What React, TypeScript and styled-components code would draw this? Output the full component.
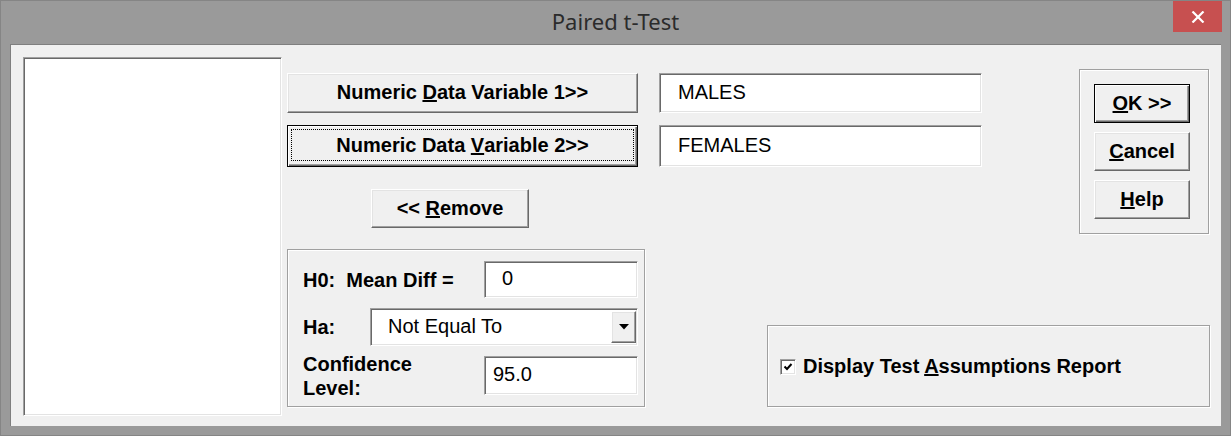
import React from "react";
import styled, { createGlobalStyle, css } from "styled-components";

const GlobalStyle = createGlobalStyle`
  html, body {
    margin: 0;
    padding: 0;
    overflow: hidden;
    background: #9a9a9a;
  }
  * {
    box-sizing: border-box;
  }
`;

const raised = css`
  border-top: 1px solid #ffffff;
  border-left: 1px solid #ffffff;
  border-right: 1px solid #696969;
  border-bottom: 1px solid #696969;
  box-shadow: inset -1px -1px 0 #a0a0a0, inset 1px 1px 0 #e3e3e3;
`;

const sunken = css`
  border-top: 1px solid #a0a0a0;
  border-left: 1px solid #a0a0a0;
  border-right: 1px solid #ffffff;
  border-bottom: 1px solid #ffffff;
  box-shadow: inset 1px 1px 0 #696969, inset -1px -1px 0 #e3e3e3;
  background: #ffffff;
`;

const Window = styled.div`
  width: 1231px;
  height: 436px;
  border: 1px solid #858585;
  background: #9a9a9a;
  display: flex;
  flex-direction: column;
  font-family: "Liberation Sans", Arial, sans-serif;
  color: #000;
`;

const TitleBar = styled.div`
  height: 43px;
  display: grid;
  grid-template-columns: 1fr auto 1fr;
`;

const Title = styled.div`
  grid-column: 2;
  font-family: "Noto Sans", "Open Sans", sans-serif;
  font-size: 22px;
  line-height: 41px;
  color: #2b2b2b;
`;

const CloseButton = styled.div`
  grid-column: 3;
  justify-self: end;
  align-self: start;
  width: 49px;
  height: 31px;
  margin-right: 8px;
  background: #c75050;
  display: flex;
  align-items: center;
  justify-content: center;
`;

const Client = styled.div`
  flex: 1;
  margin: 0 9px 9px 9px;
  border-top: 1px solid #7f7f7f;
  border-left: 1px solid #7f7f7f;
  background: #f0f0f0;
  display: flex;
  padding: 12px 0 0 12px;
`;

const ListBox = styled.div`
  ${sunken};
  width: 259px;
  height: 359px;
`;

const Middle = styled.div`
  width: 358px;
  margin-left: 5px;
  display: flex;
  flex-direction: column;
`;

const Right = styled.div`
  flex: 1;
  display: flex;
  flex-direction: column;
`;

const PushButton = styled.div<{ $w?: number; $h: number; $default?: boolean; $focus?: boolean }>`
  position: relative;
  width: ${(p) => (p.$w ? `${p.$w}px` : "100%")};
  height: ${(p) => p.$h}px;
  background: #f0f0f0;
  display: flex;
  align-items: center;
  justify-content: center;
  font-size: 20px;
  font-weight: bold;
  padding-bottom: 1px;
  ${(p) =>
    p.$default
      ? css`
          border: 1px solid #000;
          box-shadow: inset 1px 1px 0 #ffffff, inset -1px -1px 0 #696969, inset -2px -2px 0 #a0a0a0;
        `
      : raised};
  ${(p) =>
    p.$focus &&
    css`
      &::after {
        content: "";
        position: absolute;
        top: 3px;
        left: 3px;
        right: 3px;
        bottom: 5px;
        border: 1px dotted #000;
      }
    `}
`;

const VarButtons = styled.div`
  margin-top: 16px;
  display: flex;
  flex-direction: column;
  gap: 12px;
  width: 351px;
`;

const RemoveRow = styled.div`
  margin-top: 22px;
  padding-left: 84px;
`;

const GroupBox = styled.div<{ $w?: number; $h: number }>`
  width: ${(p) => (p.$w ? `${p.$w}px` : "auto")};
  height: ${(p) => p.$h}px;
  border: 1px solid #a0a0a0;
  box-shadow: 1px 1px 0 #ffffff, inset 1px 1px 0 #ffffff;
`;

const TestGroup = styled(GroupBox)`
  margin-top: 21px;
  padding: 11px 6px 0 15px;
  display: flex;
  flex-direction: column;
  gap: 10px;
`;

const FormRow = styled.div<{ $h: number }>`
  height: ${(p) => p.$h}px;
  display: flex;
  align-items: center;
  justify-content: space-between;
`;

const Label = styled.div`
  font-size: 20px;
  font-weight: bold;
  white-space: pre;
  line-height: 24px;
`;

const Field = styled.div<{ $w: number; $h: number; $indent: number }>`
  ${sunken};
  width: ${(p) => p.$w}px;
  height: ${(p) => p.$h}px;
  padding-left: ${(p) => p.$indent}px;
  padding-bottom: 2px;
  display: flex;
  align-items: center;
  font-size: 20px;
`;

const Select = styled.div`
  ${sunken};
  width: 268px;
  height: 38px;
  display: flex;
  align-items: center;
  padding: 1px 1px 1px 17px;
  font-size: 20px;
`;

const SelectText = styled.span`
  flex: 1;
  padding-bottom: 2px;
`;

const DropButton = styled.div`
  ${raised};
  width: 25px;
  height: 32px;
  background: #f0f0f0;
  display: flex;
  align-items: center;
  justify-content: center;
`;

const TopRow = styled.div`
  display: flex;
  justify-content: space-between;
  align-items: flex-start;
  padding-right: 12px;
`;

const VarFields = styled.div`
  margin-top: 16px;
  margin-left: 14px;
  display: flex;
  flex-direction: column;
  gap: 12px;
`;

const ActionGroup = styled(GroupBox)`
  margin-top: 12px;
  padding: 14px 0 0 14px;
  display: flex;
  flex-direction: column;
  gap: 9px;
`;

const OptionsGroup = styled(GroupBox)`
  align-self: flex-end;
  margin-top: 91px;
  margin-right: 11px;
  padding-left: 12px;
  display: flex;
  align-items: center;
  gap: 7px;
`;

const CheckBox = styled.div`
  ${sunken};
  width: 16px;
  height: 16px;
  display: flex;
  align-items: center;
  justify-content: center;
  margin-top: 1px;
`;

const App = (): JSX.Element => {
  return (
    <React.Fragment>
      <GlobalStyle />
      <Window>
        <TitleBar>
          <Title>Paired t-Test</Title>
          <CloseButton>
            <svg width="14" height="12" viewBox="0 0 14 12">
              <path d="M1.5 0.5 L12.5 11.5 M12.5 0.5 L1.5 11.5" stroke="#fff" strokeWidth="2.2" fill="none" />
            </svg>
          </CloseButton>
        </TitleBar>
        <Client>
          <ListBox />
          <Middle>
            <VarButtons>
              <PushButton $h={40}>
                Numeric&nbsp;<u>D</u>ata Variable 1&gt;&gt;
              </PushButton>
              <PushButton $h={42} $default $focus>
                Numeric Data&nbsp;<u>V</u>ariable 2&gt;&gt;
              </PushButton>
            </VarButtons>
            <RemoveRow>
              <PushButton $w={158} $h={39}>
                &lt;&lt;&nbsp;<u>R</u>emove
              </PushButton>
            </RemoveRow>
            <TestGroup $h={158}>
              <FormRow $h={37}>
                <Label>{"H0:  Mean Diff ="}</Label>
                <Field $w={154} $h={37} $indent={17}>
                  0
                </Field>
              </FormRow>
              <FormRow $h={38}>
                <Label>Ha:</Label>
                <Select>
                  <SelectText>Not Equal To</SelectText>
                  <DropButton>
                    <svg width="10" height="6" viewBox="0 0 10 6">
                      <path d="M0 0 H10 L5 5.5 Z" fill="#000" />
                    </svg>
                  </DropButton>
                </Select>
              </FormRow>
              <FormRow $h={39}>
                <Label>
                  Confidence
                  <br />
                  Level:
                </Label>
                <Field $w={154} $h={39} $indent={8}>
                  95.0
                </Field>
              </FormRow>
            </TestGroup>
          </Middle>
          <Right>
            <TopRow>
              <VarFields>
                <Field $w={323} $h={40} $indent={18}>
                  MALES
                </Field>
                <Field $w={323} $h={42} $indent={18}>
                  FEMALES
                </Field>
              </VarFields>
              <ActionGroup $w={130} $h={165}>
                <PushButton $w={96} $h={39} $default>
                  <u>O</u>K &gt;&gt;
                </PushButton>
                <PushButton $w={96} $h={39}>
                  <u>C</u>ancel
                </PushButton>
                <PushButton $w={96} $h={39}>
                  <u>H</u>elp
                </PushButton>
              </ActionGroup>
            </TopRow>
            <OptionsGroup $w={443} $h={82}>
              <CheckBox>
                <svg width="10" height="10" viewBox="0 0 10 10">
                  <path d="M1.5 4.5 L4 7 L8.5 2" stroke="#000" strokeWidth="2" fill="none" />
                </svg>
              </CheckBox>
              <Label>
                Display Test <u>A</u>ssumptions Report
              </Label>
            </OptionsGroup>
          </Right>
        </Client>
      </Window>
    </React.Fragment>
  );
};

export default App;
